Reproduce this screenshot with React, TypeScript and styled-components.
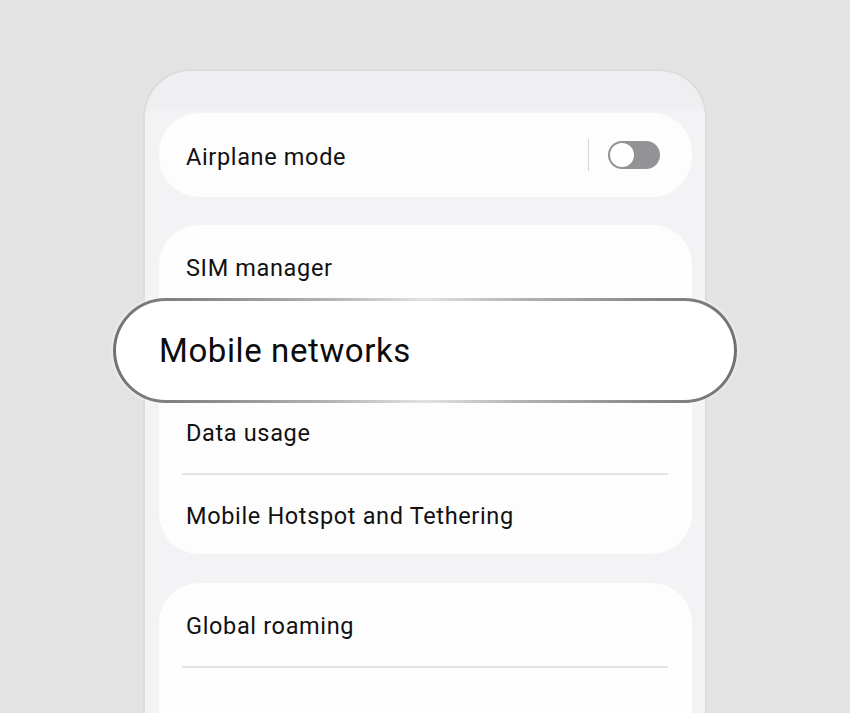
import React from "react";
import styled, { createGlobalStyle } from "styled-components";

const GlobalStyle = createGlobalStyle`
  html, body {
    margin: 0;
    padding: 0;
    background: #e3e3e3;
  }
  body {
    font-family: Roboto, "Noto Sans", "Liberation Sans", sans-serif;
    color: #111111;
  }
`;

const Page = styled.div`
  width: 850px;
  height: 713px;
  overflow: hidden;
  background: #e3e3e3;
  box-sizing: border-box;
  padding: 69px 0 0 143px;
`;

const Phone = styled.div`
  width: 564px;
  height: 720px;
  box-sizing: border-box;
  border: 2px solid #dcdcdc;
  border-bottom: none;
  border-radius: 48px 48px 0 0;
  background: linear-gradient(#efeff2 0 40px, #f3f3f5 40px);
  padding: 42px 13px 0 14px;
  display: flex;
  flex-direction: column;
  gap: 28px;
`;

const Card = styled.div<{ $gapTop?: number }>`
  background: #fdfdfe;
  border-radius: 40px;
  display: flex;
  flex-direction: column;
  margin-top: ${(p) => p.$gapTop ?? 0}px;
`;

const Row = styled.div<{ $height?: number }>`
  position: relative;
  height: ${(p) => p.$height ?? 82.5}px;
  display: flex;
  align-items: center;
  box-sizing: border-box;
  padding: 0 32px 0 27px;
  font-size: 23.5px;
  letter-spacing: 0.65px;
`;

const Label = styled.span`
  flex: 1;
  padding-top: 3px;
`;

const Divider = styled.div`
  height: 2px;
  margin: 0 24px 0 23px;
  background: #e3e3e5;
`;

const Separator = styled.div`
  width: 1px;
  height: 32px;
  background: #d4d4d6;
  margin-right: 19px;
`;

const Toggle = styled.div`
  width: 52px;
  height: 28px;
  border-radius: 14px;
  background: #939396;
  display: flex;
  align-items: center;
  padding-left: 2px;
  box-sizing: border-box;
`;

const Knob = styled.div`
  width: 24px;
  height: 24px;
  border-radius: 50%;
  background: #ffffff;
`;

const Highlight = styled.div`
  position: absolute;
  left: -46px;
  top: -10px;
  width: 624px;
  height: 105px;
  box-sizing: border-box;
  padding: 3px;
  border-radius: 53px;
  background: linear-gradient(
    90deg,
    #727272 0%,
    #8a8a8a 15%,
    #b4b4b4 35%,
    #e2e2e2 50%,
    #b4b4b4 65%,
    #8a8a8a 85%,
    #727272 100%
  );
  box-shadow: 0 0 4px rgba(255, 255, 255, 0.9);
  z-index: 2;
`;

const HighlightInner = styled.div`
  height: 100%;
  border-radius: 50px;
  background: #ffffff;
  display: flex;
  align-items: center;
  padding-left: 43px;
  box-sizing: border-box;
  font-size: 33px;
  letter-spacing: 0.6px;
  color: #0c0c0c;
`;

export default function App() {
  return (
    <Page>
      <GlobalStyle />
      <Phone>
        <Card>
          <Row $height={84}>
            <Label>Airplane mode</Label>
            <Separator />
            <Toggle>
              <Knob />
            </Toggle>
          </Row>
        </Card>

        <Card>
          <Row>
            <Label>SIM manager</Label>
          </Row>
          <Row>
            <Highlight>
              <HighlightInner>Mobile networks</HighlightInner>
            </Highlight>
          </Row>
          <Row>
            <Label>Data usage</Label>
          </Row>
          <Divider />
          <Row $height={79.5}>
            <Label>Mobile Hotspot and Tethering</Label>
          </Row>
        </Card>

        <Card $gapTop={1}>
          <Row>
            <Label>Global roaming</Label>
          </Row>
          <Divider />
          <Row>
            <Label></Label>
          </Row>
        </Card>
      </Phone>
    </Page>
  );
}
